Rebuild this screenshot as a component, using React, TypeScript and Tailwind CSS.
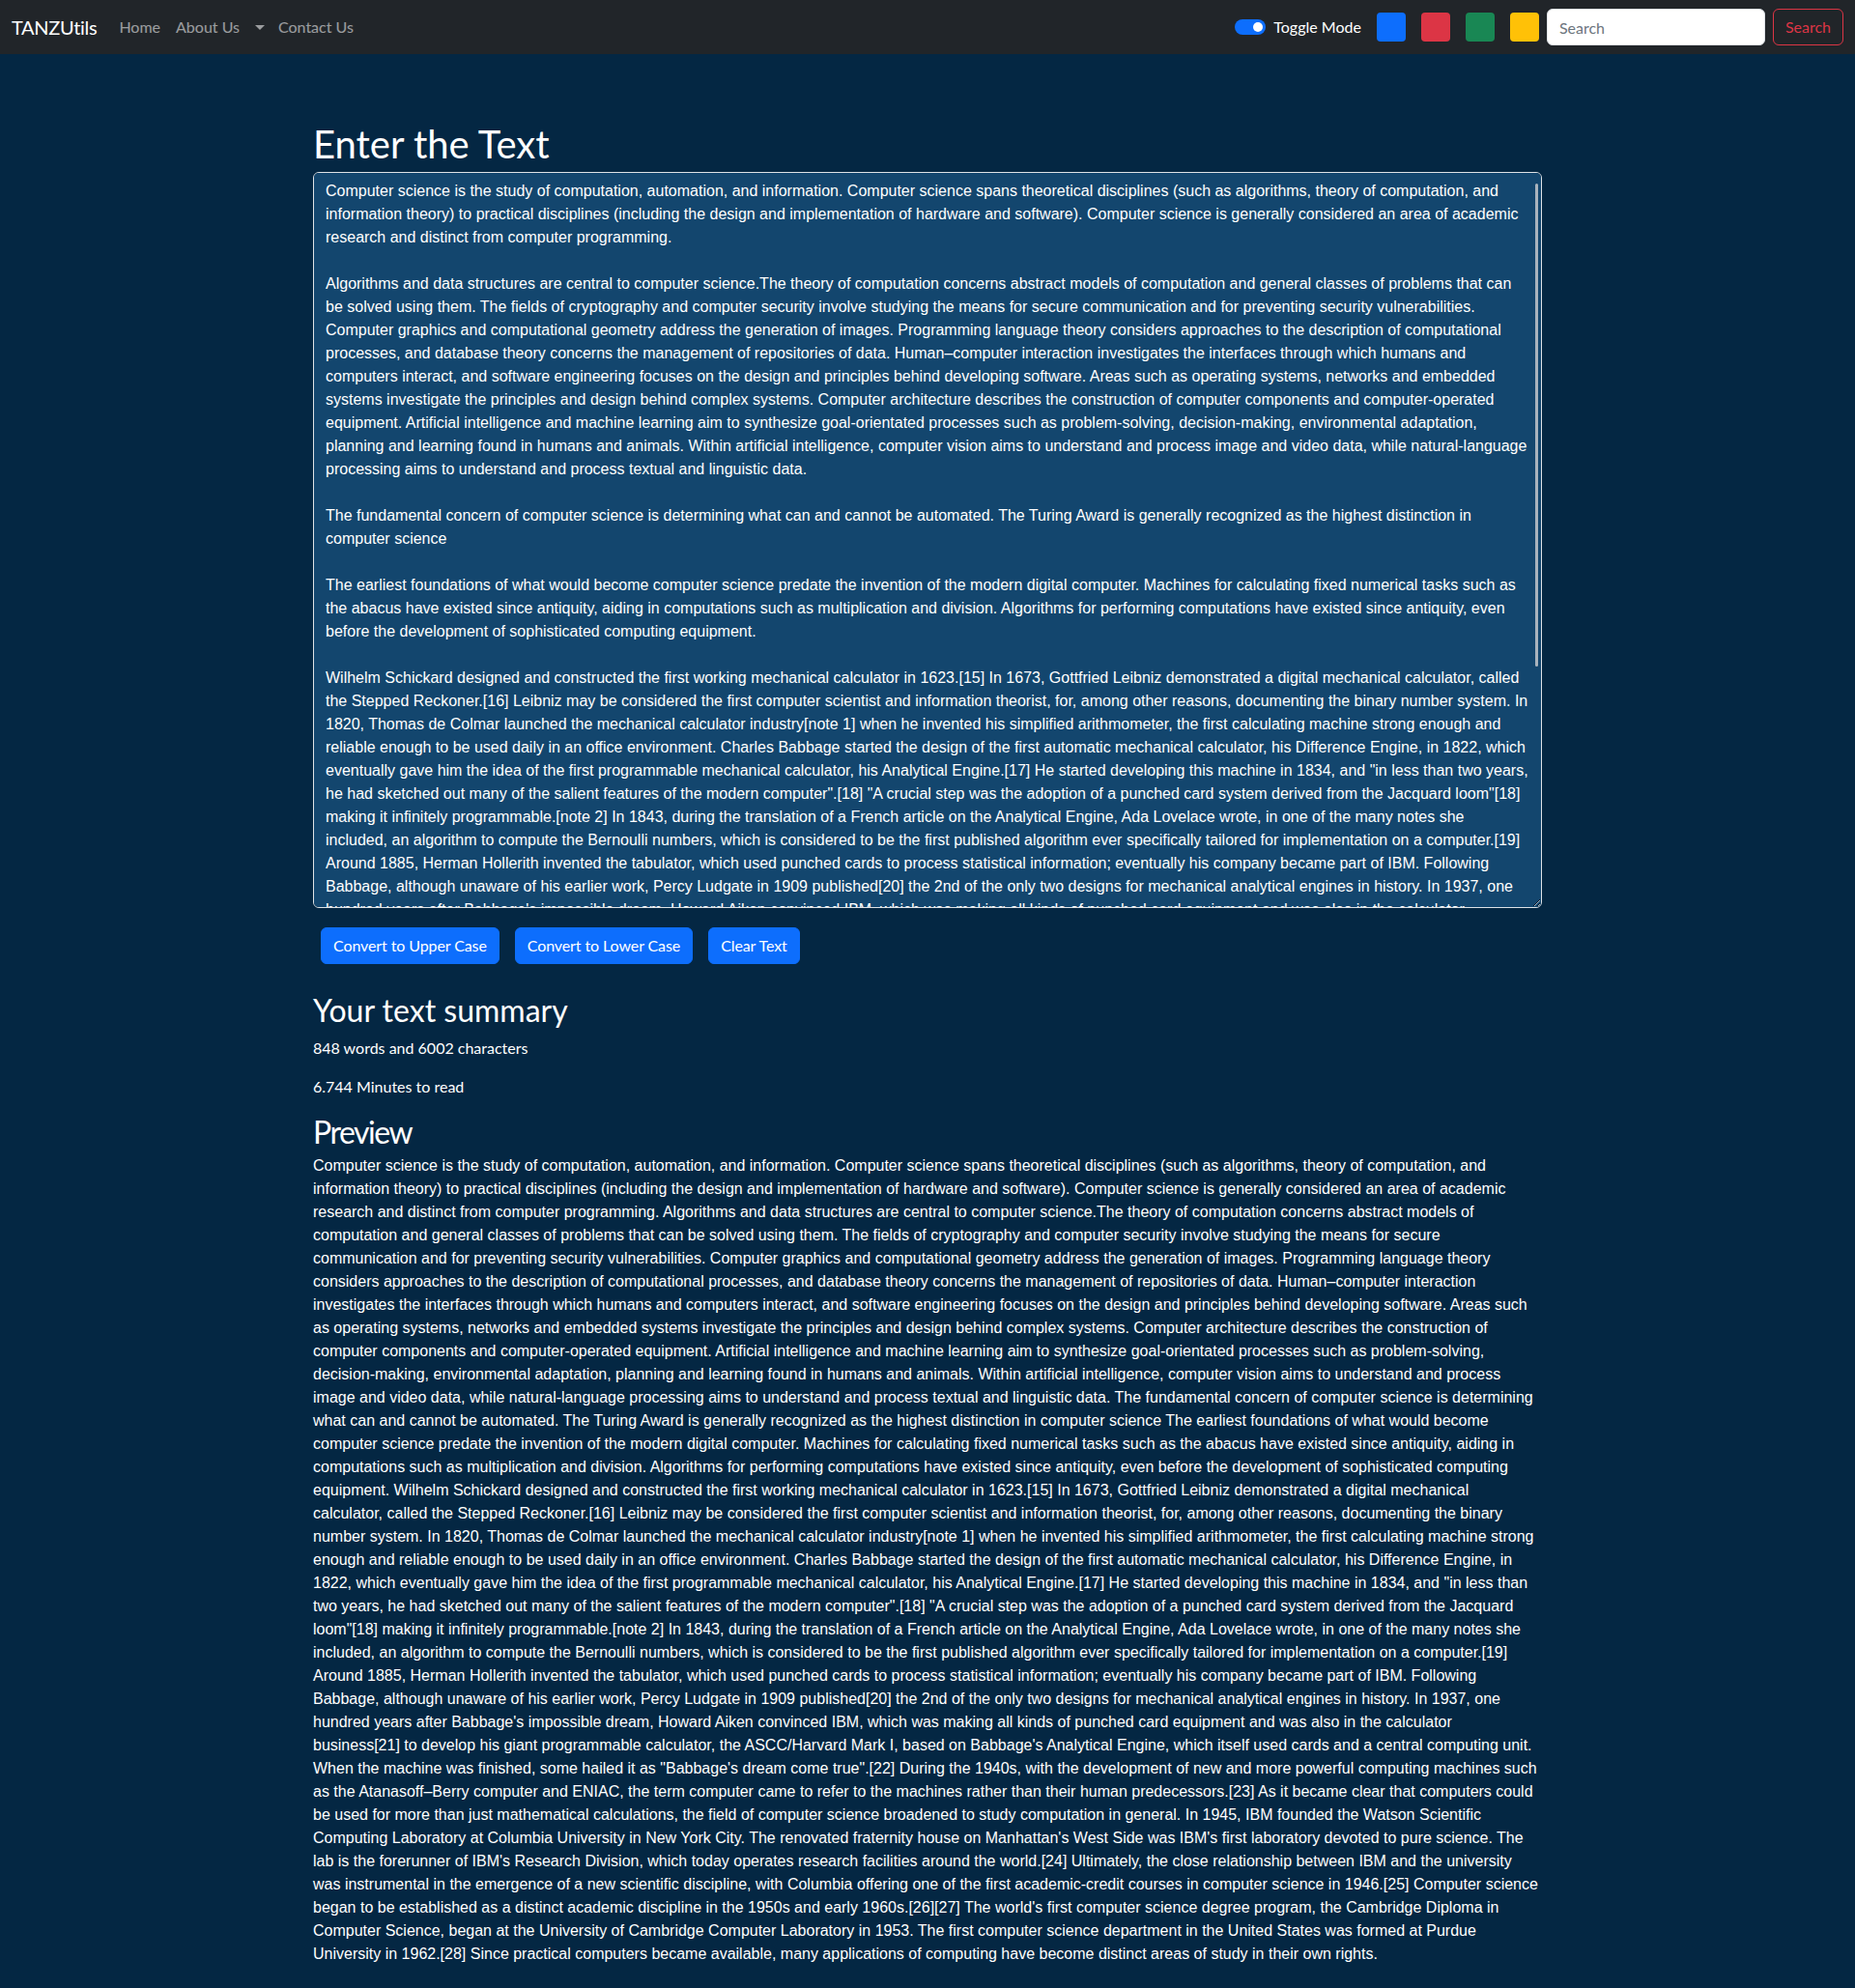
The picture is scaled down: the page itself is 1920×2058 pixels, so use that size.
const paragraphs = [
  'Computer science is the study of computation, automation, and information. Computer science spans theoretical disciplines (such as algorithms, theory of computation, and information theory) to practical disciplines (including the design and implementation of hardware and software). Computer science is generally considered an area of academic research and distinct from computer programming.',
  'Algorithms and data structures are central to computer science.The theory of computation concerns abstract models of computation and general classes of problems that can be solved using them. The fields of cryptography and computer security involve studying the means for secure communication and for preventing security vulnerabilities. Computer graphics and computational geometry address the generation of images. Programming language theory considers approaches to the description of computational processes, and database theory concerns the management of repositories of data. Human–computer interaction investigates the interfaces through which humans and computers interact, and software engineering focuses on the design and principles behind developing software. Areas such as operating systems, networks and embedded systems investigate the principles and design behind complex systems. Computer architecture describes the construction of computer components and computer-operated equipment. Artificial intelligence and machine learning aim to synthesize goal-orientated processes such as problem-solving, decision-making, environmental adaptation, planning and learning found in humans and animals. Within artificial intelligence, computer vision aims to understand and process image and video data, while natural-language processing aims to understand and process textual and linguistic data.',
  'The fundamental concern of computer science is determining what can and cannot be automated. The Turing Award is generally recognized as the highest distinction in computer science',
  'The earliest foundations of what would become computer science predate the invention of the modern digital computer. Machines for calculating fixed numerical tasks such as the abacus have existed since antiquity, aiding in computations such as multiplication and division. Algorithms for performing computations have existed since antiquity, even before the development of sophisticated computing equipment.',
  'Wilhelm Schickard designed and constructed the first working mechanical calculator in 1623.[15] In 1673, Gottfried Leibniz demonstrated a digital mechanical calculator, called the Stepped Reckoner.[16] Leibniz may be considered the first computer scientist and information theorist, for, among other reasons, documenting the binary number system. In 1820, Thomas de Colmar launched the mechanical calculator industry[note 1] when he invented his simplified arithmometer, the first calculating machine strong enough and reliable enough to be used daily in an office environment. Charles Babbage started the design of the first automatic mechanical calculator, his Difference Engine, in 1822, which eventually gave him the idea of the first programmable mechanical calculator, his Analytical Engine.[17] He started developing this machine in 1834, and "in less than two years, he had sketched out many of the salient features of the modern computer".[18] "A crucial step was the adoption of a punched card system derived from the Jacquard loom"[18] making it infinitely programmable.[note 2] In 1843, during the translation of a French article on the Analytical Engine, Ada Lovelace wrote, in one of the many notes she included, an algorithm to compute the Bernoulli numbers, which is considered to be the first published algorithm ever specifically tailored for implementation on a computer.[19] Around 1885, Herman Hollerith invented the tabulator, which used punched cards to process statistical information; eventually his company became part of IBM. Following Babbage, although unaware of his earlier work, Percy Ludgate in 1909 published[20] the 2nd of the only two designs for mechanical analytical engines in history. In 1937, one hundred years after Babbage\'s impossible dream, Howard Aiken convinced IBM, which was making all kinds of punched card equipment and was also in the calculator business[21] to develop his giant programmable calculator, the ASCC/Harvard Mark I, based on Babbage\'s Analytical Engine, which itself used cards and a central computing unit. When the machine was finished, some hailed it as "Babbage\'s dream come true".[22] During the 1940s, with the development of new and more powerful computing machines such as the Atanasoff–Berry computer and ENIAC, the term computer came to refer to the machines rather than their human predecessors.[23] As it became clear that computers could be used for more than just mathematical calculations, the field of computer science broadened to study computation in general. In 1945, IBM founded the Watson Scientific Computing Laboratory at Columbia University in New York City. The renovated fraternity house on Manhattan\'s West Side was IBM\'s first laboratory devoted to pure science. The lab is the forerunner of IBM\'s Research Division, which today operates research facilities around the world.[24] Ultimately, the close relationship between IBM and the university was instrumental in the emergence of a new scientific discipline, with Columbia offering one of the first academic-credit courses in computer science in 1946.[25] Computer science began to be established as a distinct academic discipline in the 1950s and early 1960s.[26][27] The world\'s first computer science degree program, the Cambridge Diploma in Computer Science, began at the University of Cambridge Computer Laboratory in 1953. The first computer science department in the United States was formed at Purdue University in 1962.[28] Since practical computers became available, many applications of computing have become distinct areas of study in their own rights.',
]

const text = paragraphs.join('\n\n')

const swatches = ['bg-[#0d6efd]', 'bg-[#dc3545]', 'bg-[#198754]', 'bg-[#ffc107]']

function Navbar() {
  return (
    <nav className="flex h-14 items-center justify-between bg-[#212529] px-3">
      <div className="flex items-center">
        <a className="mr-[15px] text-xl leading-[30px] tracking-[-0.3px] text-white">TANZUtils</a>
        <ul className="flex items-center text-base text-white/55">
          <li className="px-2 py-2">Home</li>
          <li className="px-2 py-2">About Us</li>
          <li className="flex items-center py-2 pr-1.5 pl-1">
            <span className="ml-1 h-0 w-0 border-x-[5px] border-t-[5px] border-x-transparent border-t-white/55" />
          </li>
          <li className="px-2 py-2">Contact Us</li>
        </ul>
      </div>

      <div className="flex items-center">
        <div className="flex items-center gap-2">
          <span className="flex h-4 w-8 items-center justify-end rounded-full bg-[#0d6efd] px-[3px]">
            <span className="h-2.5 w-2.5 rounded-full bg-white" />
          </span>
          <span className="text-base text-white">Toggle Mode</span>
        </div>
        <div className="ml-2 flex items-center">
          {swatches.map((c) => (
            <div key={c} className={`mx-2 h-[30px] w-[30px] rounded ${c}`} />
          ))}
        </div>
        <form className="flex items-center">
          <input
            type="search"
            placeholder="Search"
            className="mr-2 h-[38px] w-[226px] rounded-md border border-[#dee2e6] bg-white px-3 text-base text-[#212529] placeholder:text-[#6c757d]"
          />
          <button
            type="button"
            className="h-[38px] rounded-md border border-[#dc3545] px-3 text-base text-[#dc3545]"
          >
            Search
          </button>
        </form>
      </div>
    </nav>
  )
}

export default function App() {
  return (
    <div className="min-h-screen bg-[#042743] font-['Lato',sans-serif] text-white">
      <Navbar />
      <div className="h-[50px]" />

      <div className="mx-auto mt-[19px] mb-4 w-[1272px]">
        <h1 className="mb-[5px] text-[40px] leading-[1.2] font-normal">Enter the Text</h1>
        <div className="relative mb-4">
          <textarea
            readOnly
            defaultValue={text}
            className="block h-[762px] w-full rounded-md border border-[#dee2e6] bg-[#13466e] px-3 pt-[7px] pb-1.5 font-['Liberation_Sans',sans-serif] text-base leading-6 text-white outline-none [scrollbar-width:none]"
          />
          <div className="pointer-events-none absolute top-3 right-1 h-[500px] w-[3px] rounded-full bg-[#a9b3bd]" />
        </div>
        <div>
          <button className="mx-2 my-1 rounded-md border border-[#0d6efd] bg-[#0d6efd] px-3 py-1.5 text-base leading-6 tracking-[-0.1px] text-white">
            Convert to Upper Case
          </button>
          <button className="mx-2 my-1 rounded-md border border-[#0d6efd] bg-[#0d6efd] px-3 py-1.5 text-base leading-6 tracking-[-0.1px] text-white">
            Convert to Lower Case
          </button>
          <button className="mx-2 my-1 rounded-md border border-[#0d6efd] bg-[#0d6efd] px-3 py-1.5 text-base leading-6 tracking-[-0.1px] text-white">
            Clear Text
          </button>
        </div>
      </div>

      <div className="mx-auto mt-[25px] w-[1272px] pb-4">
        <h2 className="mb-2 text-[32px] leading-[1.2] font-normal">Your text summary</h2>
        <p className="mb-4 text-base leading-6">848 words and 6002 characters</p>
        <p className="mb-4 text-base leading-6">6.744 Minutes to read</p>
        <h2 className="mb-[3px] text-[32px] leading-[1.2] font-normal tracking-[-1.5px]">Preview</h2>
        <p className="mb-4 font-['Liberation_Sans',sans-serif] text-base leading-6">{text}</p>
      </div>
    </div>
  )
}
